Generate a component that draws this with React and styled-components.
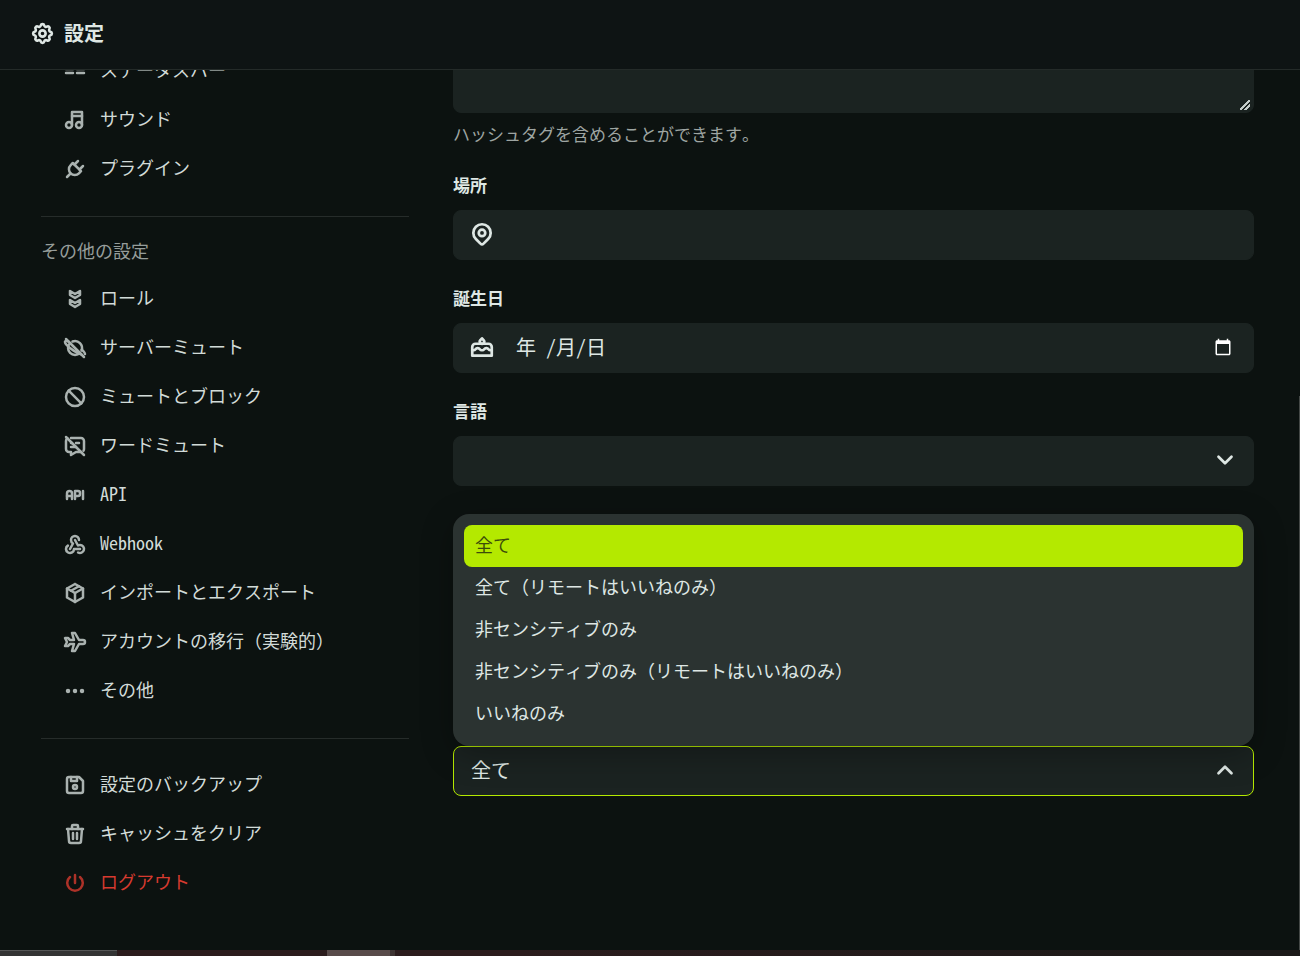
import React, { useState } from "react";
import styled, { createGlobalStyle, css } from "styled-components";
import {
	TbSettings,
	TbEqualDouble,
	TbMusic,
	TbPlug,
	TbBadges,
	TbPlanetOff,
	TbBan,
	TbMessageOff,
	TbApi,
	TbWebhook,
	TbPackage,
	TbPlane,
	TbDots,
	TbDeviceFloppy,
	TbTrash,
	TbPower,
	TbMapPin,
	TbCake,
	TbChevronDown,
	TbChevronUp,
} from "react-icons/tb";

const clientItems = [
	{ icon: TbEqualDouble, text: "ステータスバー" },
	{ icon: TbMusic, text: "サウンド" },
	{ icon: TbPlug, text: "プラグイン" },
];

const otherItems = [
	{ icon: TbBadges, text: "ロール" },
	{ icon: TbPlanetOff, text: "サーバーミュート" },
	{ icon: TbBan, text: "ミュートとブロック" },
	{ icon: TbMessageOff, text: "ワードミュート" },
	{ icon: TbApi, text: "API" },
	{ icon: TbWebhook, text: "Webhook" },
	{ icon: TbPackage, text: "インポートとエクスポート" },
	{ icon: TbPlane, text: "アカウントの移行（実験的）" },
	{ icon: TbDots, text: "その他" },
];

const actionItems = [
	{ icon: TbDeviceFloppy, text: "設定のバックアップ" },
	{ icon: TbTrash, text: "キャッシュをクリア" },
	{ icon: TbPower, text: "ログアウト", danger: true },
];

const reactionOptions = [
	"全て",
	"全て（リモートはいいねのみ）",
	"非センシティブのみ",
	"非センシティブのみ（リモートはいいねのみ）",
	"いいねのみ",
];

const MenuGroup = ({ title, items, as }) => (
	<Group>
		{title && <GroupTitle>{title}</GroupTitle>}
		{items.map(({ icon: Icon, text, danger }) => (
			<MenuItem
				key={text}
				as={as}
				href={as ? undefined : "#"}
				type={as ? "button" : undefined}
				$danger={danger}
			>
				<Icon />
				<span>{text}</span>
			</MenuItem>
		))}
	</Group>
);

const ReactionSelect = () => {
	const [value, setValue] = useState(reactionOptions[0]);
	const [open, setOpen] = useState(true);

	const toggle = (ev) => {
		ev.preventDefault();
		setOpen(!open);
	};

	return (
		<SelectAnchor>
			{open && (
				<Popup role="listbox">
					{reactionOptions.map((option) => (
						<Option
							key={option}
							type="button"
							role="option"
							aria-selected={option === value}
							$active={option === value}
							onClick={() => {
								setValue(option);
								setOpen(false);
							}}
						>
							{option}
						</Option>
					))}
				</Popup>
			)}
			<Box $focused={open}>
				<Select
					value={value}
					onMouseDown={toggle}
					onChange={(ev) => setValue(ev.target.value)}
				>
					{reactionOptions.map((option) => (
						<option key={option}>{option}</option>
					))}
				</Select>
				{open ? <TbChevronUp /> : <TbChevronDown />}
			</Box>
		</SelectAnchor>
	);
};

const App = () => (
	<Page>
		<GlobalStyle />
		<Header>
			<TbSettings />
			<h1>設定</h1>
		</Header>

		<Content>
			<Sidebar>
				<MenuGroup items={clientItems} />
				<MenuGroup title="その他の設定" items={otherItems} />
				<MenuGroup items={actionItems} as="button" />
			</Sidebar>

			<Form>
				<Bio aria-describedby="bio-caption" />
				<Caption id="bio-caption">
					ハッシュタグを含めることができます。
				</Caption>

				<Field>
					<Label htmlFor="location">場所</Label>
					<Box>
						<TbMapPin />
						<Input id="location" />
					</Box>
				</Field>

				<Field>
					<Label htmlFor="birthday">誕生日</Label>
					<Box>
						<TbCake />
						<Input id="birthday" placeholder="年 /月/日" />
						<PickerButton type="button">
							<svg viewBox="0 0 24 24" fill="currentColor">
								<path d="M20 3h-1V1h-2v2H7V1H5v2H4c-1.1 0-2 .9-2 2v16c0 1.1.9 2 2 2h16c1.1 0 2-.9 2-2V5c0-1.1-.9-2-2-2zm0 18H4V8h16v13z" />
							</svg>
						</PickerButton>
					</Box>
				</Field>

				<Field>
					<Label htmlFor="language">言語</Label>
					<Box>
						<Select id="language" />
						<TbChevronDown />
					</Box>
				</Field>

				<ReactionSelect />
			</Form>
			<ScrollThumb />
		</Content>

		<Taskbar>
			<Segment $width={117} $color="#333434" $line="#555656" />
			<Segment $width={210} $color="#2b1c1d" />
			<Segment $width={63} $color="#584b4a" />
			<Segment $width={5} $color="#3d3332" />
		</Taskbar>
	</Page>
);

const GlobalStyle = createGlobalStyle`
	* {
		box-sizing: border-box;
	}

	body {
		margin: 0;
		background: #0c1210;
		color: #dee7e4;
		font-family: "Noto Sans Mono CJK JP", "Noto Sans CJK JP", sans-serif;
	}

	button, input, select, textarea {
		font-family: inherit;
		color: inherit;
	}
`;

const Page = styled.div`
	display: flex;
	flex-direction: column;
	height: 100vh;
	overflow: hidden;
`;

const Header = styled.header`
	display: flex;
	align-items: center;
	gap: 9px;
	flex: none;
	height: 70px;
	padding: 0 30px 3px;
	background: #0e1414;
	border-bottom: 1px solid #242b29;

	svg {
		width: 25px;
		height: 25px;
		stroke-width: 2.5;
	}

	h1 {
		margin: 0;
		font-size: 20px;
		line-height: 28px;
	}
`;

const Content = styled.div`
	display: flex;
	flex: 1;
	min-height: 0;
	overflow: hidden;
`;

const Sidebar = styled.nav`
	flex: 0 0 450px;
	margin-top: -24px;
	padding: 0 41px;
`;

const Group = styled.div`
	& + & {
		margin-top: 23px;
		padding-top: 21px;
		border-top: 1px solid #262c2a;
	}
`;

const GroupTitle = styled.div`
	margin-bottom: 12px;
	font-size: 18px;
	line-height: 24px;
	color: #969d9a;
`;

const MenuItem = styled.a`
	display: flex;
	align-items: center;
	gap: 13px;
	width: 100%;
	height: 49px;
	padding: 0 22px;
	border: 0;
	background: none;
	color: ${({ $danger }) => ($danger ? "#d63a2f" : "#d2dbd8")};
	font-size: 18px;
	line-height: 24px;
	text-align: left;
	text-decoration: none;
	white-space: nowrap;
	cursor: pointer;

	svg {
		flex: none;
		width: 24px;
		height: 24px;
		stroke-width: 2.5;
		opacity: 0.8;
	}

	span {
		padding-bottom: 3px;
	}
`;

const Form = styled.main`
	flex: 1;
	min-width: 0;
	padding: 0 46px 0 3px;
`;

const boxStyle = css`
	background: #1b2321;
	border: 1px solid #1b2321;
	border-radius: 8px;
`;

const Bio = styled.textarea`
	${boxStyle}
	display: block;
	width: 100%;
	height: 131px;
	margin-top: -88px;
	padding: 12px 16px;
	font-size: 20px;
	outline: none;

	&::-webkit-resizer {
		background: linear-gradient(
				135deg,
				transparent 42%,
				#c4ccc9 42% 56%,
				transparent 56% 70%,
				#c4ccc9 70% 84%,
				transparent 84%
			)
			2px 3px / 10px 10px no-repeat;
	}
`;

const Caption = styled.div`
	margin-top: 8px;
	font-size: 17px;
	line-height: 26px;
	color: #9ea5a2;
`;

const Field = styled.div`
	margin-top: 25px;
`;

const Label = styled.label`
	display: block;
	margin-bottom: 12px;
	font-size: 17px;
	font-weight: 700;
	line-height: 26px;
`;

const Box = styled.div`
	${boxStyle}
	display: flex;
	align-items: center;
	height: 50px;
	padding: 0 15px 3px;
	${({ $focused }) => $focused && "border-color: #b4e900;"}

	> svg {
		flex: none;
		width: 26px;
		height: 26px;
		stroke-width: 2.5;
	}
`;

const Input = styled.input`
	flex: 1;
	min-width: 0;
	height: 100%;
	padding: 0 0 0 21px;
	border: 0;
	outline: none;
	background: none;
	font-size: 20px;

	&::placeholder {
		color: #dee7e4;
		opacity: 1;
	}
`;

const PickerButton = styled.button`
	display: flex;
	padding: 0 6px;
	border: 0;
	background: none;
	color: #ffffff;

	svg {
		width: 18px;
		height: 18px;
	}
`;

const Select = styled.select`
	flex: 1;
	min-width: 0;
	height: 100%;
	padding: 0 0 0 2px;
	appearance: none;
	border: 0;
	outline: none;
	background: none;
	font-size: 20px;
`;

const SelectAnchor = styled.div`
	position: relative;
	margin-top: 260px;
`;

const Popup = styled.div`
	position: absolute;
	bottom: 100%;
	left: 0;
	right: 0;
	padding: 11px;
	background: #2b3331;
	border-radius: 16px;
	box-shadow: 0 8px 32px rgba(0, 0, 0, 0.3);
`;

const Option = styled.button`
	display: block;
	width: 100%;
	height: 42px;
	padding: 0 11px 4px;
	border: 0;
	border-radius: 8px;
	background: ${({ $active }) => ($active ? "#b4e900" : "none")};
	color: ${({ $active }) => ($active ? "#3c4c0a" : "#dee7e4")};
	font-size: 18px;
	line-height: 24px;
	text-align: left;
`;

const ScrollThumb = styled.div`
	flex: none;
	align-self: flex-end;
	width: 1px;
	height: 63%;
	margin-left: -1px;
	background: #444846;
`;

const Taskbar = styled.div`
	display: flex;
	flex: none;
	height: 6px;
	background: linear-gradient(90deg, #2b1c1d 40%, #1b1918 95%);
`;

const Segment = styled.div`
	width: ${({ $width }) => $width}px;
	background: ${({ $color }) => $color};
	border-top: 1px solid ${({ $line, $color }) => $line || $color};
`;

export default App;
